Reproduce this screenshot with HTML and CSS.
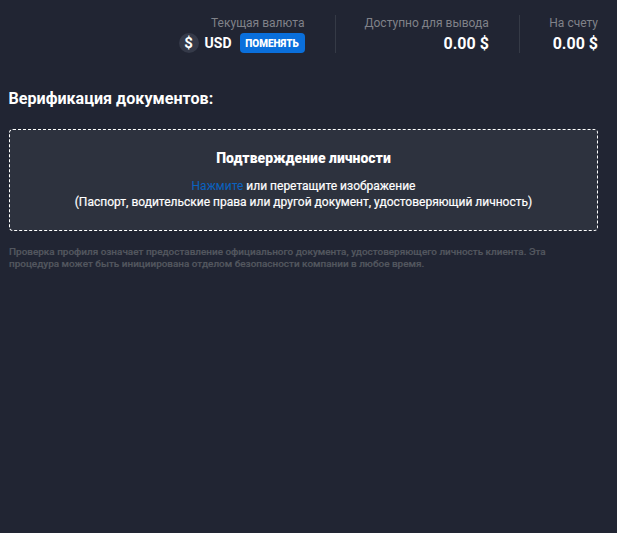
FILE: index.html
```html
<!DOCTYPE html>
<html lang="ru">
<head>
<meta charset="utf-8">
<title>Верификация</title>
<link rel="stylesheet" href="styles.css">
</head>
<body>
<header class="stats">
  <div class="stat">
    <div class="label">Текущая валюта</div>
    <div class="currency">
      <span class="coin">$</span>
      <span class="code">USD</span>
      <button class="change">ПОМЕНЯТЬ</button>
    </div>
  </div>
  <div class="stat">
    <div class="label">Доступно для вывода</div>
    <div class="value">0.00 $</div>
  </div>
  <div class="stat">
    <div class="label">На счету</div>
    <div class="value">0.00 $</div>
  </div>
</header>
<main class="content">
  <h1 class="title">Верификация документов:</h1>
  <section class="drop">
    <h2 class="drop-title">Подтверждение личности</h2>
    <p class="drop-text"><a class="link">Нажмите</a> или перетащите изображение<br>(Паспорт, водительские права или другой документ, удостоверяющий личность)</p>
  </section>
  <p class="note">Проверка профиля означает предоставление официального документа, удостоверяющего личность клиента. Эта процедура может быть инициирована отделом безопасности компании в любое время.</p>
</main>
</body>
</html>
```
FILE: styles.css
```css
* { box-sizing: border-box; }
html, body { height: 100%; }
body {
  margin: 0;
  background: #212533;
  color: #fff;
  font-family: Roboto, "Liberation Sans", sans-serif;
  overflow: hidden;
}
.stats {
  display: flex;
  justify-content: flex-end;
  padding: 15px 19px 0 0;
}
.stat {
  display: flex;
  flex-direction: column;
  align-items: flex-end;
  height: 38px;
  padding: 0 30px 0 29.5px;
  border-right: 1px solid #353a46;
}
.stat:nth-child(2) { padding-left: 29px; }
.stat:last-child { border-right: 0; padding-right: 0; }
.label {
  font-size: 12px;
  line-height: 16px;
  color: #808289;
}
.value {
  font-size: 16px;
  font-weight: 700;
  line-height: 20px;
  margin-top: 3px;
}
.currency {
  display: flex;
  align-items: center;
  margin-top: 2px;
}
.coin {
  width: 20px;
  height: 20px;
  border-radius: 50%;
  background: #353a49;
  font-size: 15px;
  font-weight: 700;
  line-height: 20px;
  text-align: center;
}
.code {
  margin-left: 6px;
  font-size: 14px;
  font-weight: 700;
}
.change {
  margin-left: 8px;
  width: 65px;
  height: 20px;
  padding: 0;
  border: 0;
  border-radius: 4px;
  background: #0a6fdb;
  color: #fff;
  font-family: inherit;
  font-size: 10px;
  font-weight: 900;
}
.content { padding: 0 19px 0 9px; }
.title {
  margin: 36px 0 0 -0.5px;
  font-size: 16.1px;
  font-weight: 700;
  line-height: 20px;
}
.drop {
  height: 102px;
  margin-top: 20px;
  padding-top: 19px;
  background: #2d323e;
  border: 1px dashed #fff;
  border-radius: 4px;
  text-align: center;
}
.drop-title {
  margin: 0;
  font-size: 14px;
  font-weight: 900;
  line-height: 18px;
}
.drop-text {
  margin: 11px 0 0;
  font-size: 12px;
  font-weight: 400;
  line-height: 16px;
  -webkit-text-stroke: 0.2px #fff;
}
.link { color: #0a62c0; -webkit-text-stroke: 0; }
.note {
  margin: 15px 0 0;
  font-size: 9.95px;
  font-weight: 500;
  line-height: 12px;
  color: #53575f;
  max-width: 545px;
  -webkit-text-stroke: 0.2px #53575f;
}
```
